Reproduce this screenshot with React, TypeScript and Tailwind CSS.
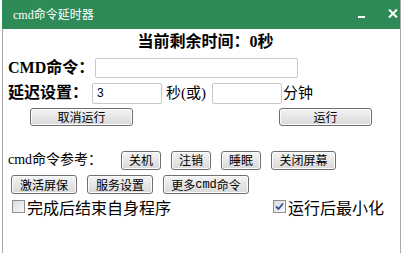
import React from "react";

const serif = "font-['Liberation_Serif','Noto_Sans_CJK_SC',serif]";

function Btn({ w, children }: { w: string; children: React.ReactNode }) {
  return (
    <div
      className={`${w} h-full flex items-center justify-center rounded-[3px] border border-[#6f6f6f] bg-linear-to-b from-[#f4f4f4] to-[#d9d9d9] shadow-[inset_0_0_0_1px_#fbfbfb] text-[12px] leading-none text-black font-['Noto_Sans_CJK_SC',sans-serif]`}
    >
      {children}
    </div>
  );
}

function Check({ checked }: { checked?: boolean }) {
  return (
    <span className="w-[13px] h-[13px] border border-[#8e8f8f] bg-linear-to-br from-[#dcdcdc] to-[#f8f8f8] flex items-center justify-center shrink-0">
      {checked && (
        <svg width="9" height="9" viewBox="0 0 9 9">
          <path d="M1 4.5 L3.5 7 L8 1.5" stroke="#2a4f9c" strokeWidth="1.8" fill="none" />
        </svg>
      )}
    </span>
  );
}

export default function App() {
  return (
    <div className={`w-[405px] h-[253px] bg-white overflow-hidden ${serif}`}>
      <div className="ml-[2px] w-[399px] h-[253px] border-l border-r border-[#a8a8a8] flex flex-col">
        {/* title bar */}
        <div className="h-[29px] -ml-px bg-[#2e8b57] flex items-center text-white">
          <span className="ml-[11px] text-[12px] leading-none">cmd命令延时器</span>
          <span className="ml-auto mr-[23px] mt-[4px] w-[7px] h-[2px] bg-white" />
          <svg className="mr-[2px] mb-[3px]" width="10" height="9" viewBox="0 0 10 9">
            <path d="M1 0.5 L9 8.5 M9 0.5 L1 8.5" stroke="white" strokeWidth="2" />
          </svg>
        </div>

        {/* heading */}
        <div className="h-[26px] flex items-center justify-center pl-[8px] text-[16px] font-bold text-black">
          当前剩余时间：0秒
        </div>

        {/* cmd row */}
        <div className="h-[26px] flex items-center pl-[5px]">
          <span className="w-[87px] text-[16px] font-bold leading-none">CMD命令：</span>
          <div className="w-[203px] h-[20px] border border-[#c8c8c8] rounded-[2px] bg-white" />
        </div>

        {/* delay row */}
        <div className="h-[24px] flex items-center pl-[5px] text-[15px]">
          <span className="w-[84px] text-[16px] font-bold leading-none">延迟设置：</span>
          <div className="w-[70px] h-[21px] border border-[#c8c8c8] rounded-[2px] bg-white flex items-center pl-[4px] text-[12px] font-['Liberation_Sans',sans-serif]">
            3
          </div>
          <span className="ml-[4px] w-[46px] leading-none">秒(或)</span>
          <div className="w-[70px] h-[21px] border border-[#c8c8c8] rounded-[2px] bg-white" />
          <span className="ml-[1px] leading-none">分钟</span>
        </div>

        {/* run buttons */}
        <div className="h-[24px] flex items-center pl-[27px]">
          <div className="h-[18px] flex">
            <Btn w="w-[103px]">取消运行</Btn>
          </div>
          <div className="h-[18px] flex ml-[146px]">
            <Btn w="w-[93px]">运行</Btn>
          </div>
        </div>

        <div className="h-[19px]" />

        {/* cmd reference row */}
        <div className="h-[24px] flex items-center pl-[5px]">
          <span className="w-[113px] text-[14px] leading-none">cmd命令参考：</span>
          <div className="h-[19px] flex gap-[10px]">
            <Btn w="w-[40px]">关机</Btn>
            <Btn w="w-[40px]">注销</Btn>
            <Btn w="w-[40px]">睡眠</Btn>
            <Btn w="w-[65px]">关闭屏幕</Btn>
          </div>
        </div>

        {/* second button row */}
        <div className="h-[25px] flex items-center pl-[8px]">
          <div className="h-[19px] flex gap-[10px]">
            <Btn w="w-[66px]">激活屏保</Btn>
            <Btn w="w-[66px]">服务设置</Btn>
            <Btn w="w-[86px]">
              更多<span className="font-['Liberation_Mono',monospace]">cmd</span>命令
            </Btn>
          </div>
        </div>

        {/* checkboxes */}
        <div className="h-[19px] flex items-center pl-[9px] text-[16px] font-['Noto_Sans_CJK_SC',sans-serif] leading-none">
          <Check />
          <span className="ml-[2px] w-[246px]">完成后结束自身程序</span>
          <Check checked />
          <span className="ml-[2px]">运行后最小化</span>
        </div>
      </div>
    </div>
  );
}
